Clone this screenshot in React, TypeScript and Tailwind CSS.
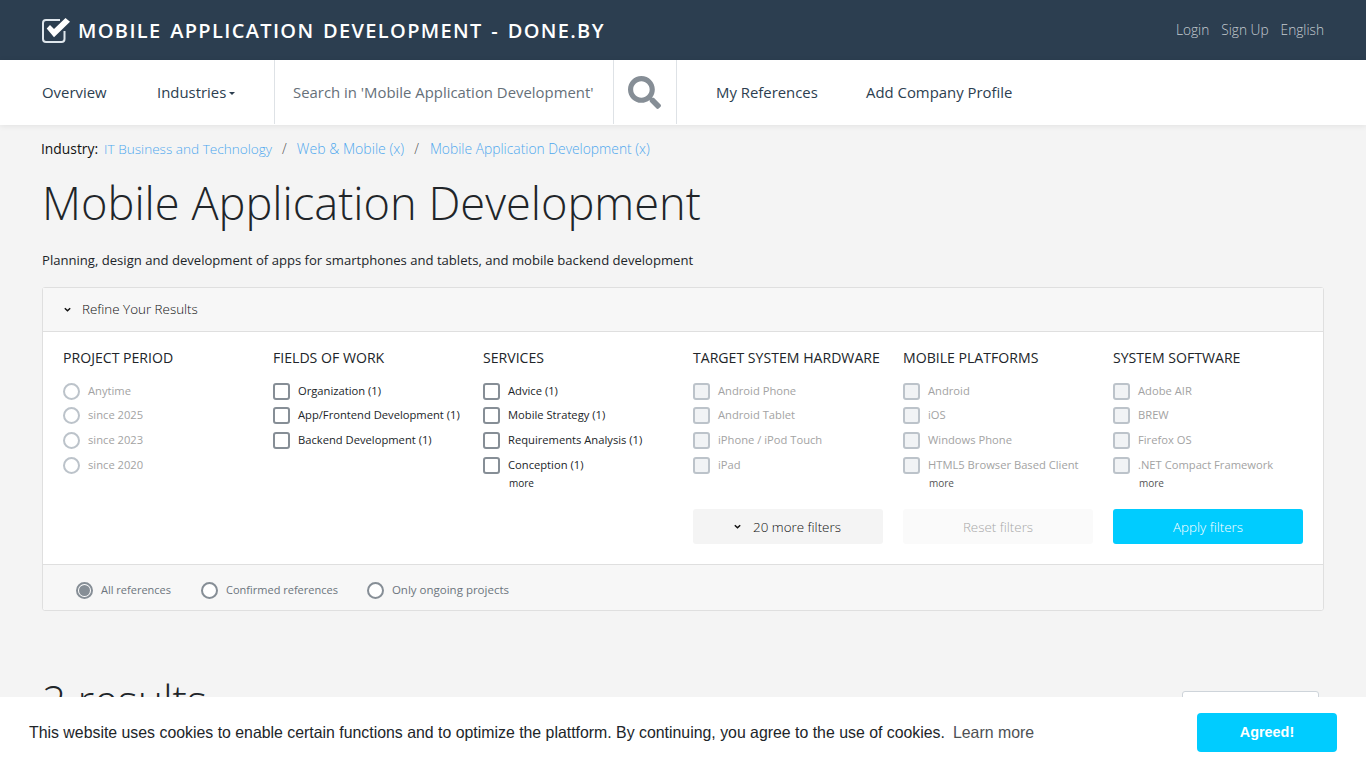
import React from "react";

const font = "font-['Open_Sans','Noto_Sans',sans-serif]";

function Box({ dim }: { dim?: boolean }) {
  return <span className={"block w-[17px] h-[17px] shrink-0 rounded-[3px] border-2 " + (dim ? "border-[#bcc3ca] bg-[#f1f3f5]" : "border-[#868e96] bg-white")} />;
}
function Radio({ dim, checked }: { dim?: boolean; checked?: boolean }) {
  return (
    <span className={"flex items-center justify-center w-[17px] h-[17px] shrink-0 rounded-full border-2 " + (dim ? "border-[#bcc3ca] bg-white" : "border-[#868e96] bg-white")}>
      {checked && <span className="block w-[11px] h-[11px] rounded-full bg-[#868e96]" />}
    </span>
  );
}

type Col = { title: string; items: string[]; kind: "radio" | "box"; dim?: boolean; more?: boolean };
const cols: Col[] = [
  { title: "PROJECT PERIOD", kind: "radio", dim: true, items: ["Anytime", "since 2025", "since 2023", "since 2020"] },
  { title: "FIELDS OF WORK", kind: "box", items: ["Organization (1)", "App/Frontend Development (1)", "Backend Development (1)"] },
  { title: "SERVICES", kind: "box", more: true, items: ["Advice (1)", "Mobile Strategy (1)", "Requirements Analysis (1)", "Conception (1)"] },
  { title: "TARGET SYSTEM HARDWARE", kind: "box", dim: true, items: ["Android Phone", "Android Tablet", "iPhone / iPod Touch", "iPad"] },
  { title: "MOBILE PLATFORMS", kind: "box", dim: true, more: true, items: ["Android", "iOS", "Windows Phone", "HTML5 Browser Based Client"] },
  { title: "SYSTEM SOFTWARE", kind: "box", dim: true, more: true, items: ["Adobe AIR", "BREW", "Firefox OS", ".NET Compact Framework"] },
];

function Chevron({ className }: { className?: string }) {
  return (
    <svg viewBox="0 0 10 10" className={className} fill="none" stroke="currentColor" strokeWidth="1.6">
      <path d="M2 3.5 L5 6.5 L8 3.5" />
    </svg>
  );
}

export default function App() {
  return (
    <div className={font + " relative h-screen overflow-hidden bg-[#f4f4f4] text-[#212529]"}>
      <header className="h-[60px] bg-[#2c3e50] flex items-center justify-between pl-[42px] pr-[42px]">
        <div className="flex items-center gap-[8px]">
          <svg viewBox="0 0 28 25" className="w-[28px] h-[25px] mt-[1px]" fill="none">
            <path d="M22.5 13 V21 a3 3 0 0 1 -3 3 H4 a3 3 0 0 1 -3 -3 V5 A3 3 0 0 1 4 2 H18" stroke="#dfe6ec" strokeWidth="2" />
            <path d="M4.7 10.5 L8 7 L12 11 L23.5 0 L28 3.8 L12 19.2 Z" fill="#fff" />
          </svg>
          <span className="text-white text-[20px] font-semibold tracking-[1.35px] [word-spacing:2px] leading-none pt-[2px]">MOBILE APPLICATION DEVELOPMENT - DONE.BY</span>
        </div>
        <div className="flex gap-[12px] text-[13.7px] font-light text-[#c5cbd1]">
          <span>Login</span><span>Sign Up</span><span>English</span>
        </div>
      </header>

      <nav className="relative h-[65px] bg-white flex items-stretch pl-[42px] shadow-[0_1px_6px_rgba(0,0,0,0.08)] text-[14.9px] text-[#2c3e50]">
        <div className="flex items-center w-[115px]">Overview</div>
        <div className="flex items-center w-[117px]">
          Industries
          <span className="ml-[3px] mt-[2px] border-x-[3.5px] border-x-transparent border-t-[3px] border-t-[#2c3e50]" />
        </div>
        <div className="flex items-center w-[340px] h-[64px] border-x border-[#dee2e6] pl-[18px] pt-[1px] text-[#667079] whitespace-nowrap overflow-hidden">Search in 'Mobile Application Development'</div>
        <div className="flex items-center justify-center w-[63px] h-[64px] border-r border-[#dee2e6]">
          <svg viewBox="0 0 512 512" className="w-[33px] h-[33px] mr-[1px]" fill="#868e96">
            <path d="M505 442.7L405.3 343c-4.5-4.5-10.6-7-17-7H372c27.6-35.3 44-79.7 44-128C416 93.1 322.9 0 208 0S0 93.1 0 208s93.1 208 208 208c48.3 0 92.7-16.4 128-44v16.3c0 6.4 2.5 12.5 7 17l99.7 99.7c9.4 9.4 24.6 9.4 33.9 0l28.3-28.3c9.4-9.4 9.4-24.6.1-34zM208 336c-70.7 0-128-57.2-128-128 0-70.7 57.2-128 128-128 70.7 0 128 57.2 128 128 0 70.7-57.2 128-128 128z" />
          </svg>
        </div>
        <div className="flex items-center ml-[39px] w-[150px]">My References</div>
        <div className="flex items-center">Add Company Profile</div>
      </nav>

      <main className="px-[42px]">
        <div className="flex items-baseline h-[21px] mt-[13px] text-[13.85px] font-light text-[#4fa8ee] whitespace-nowrap">
          <span className="text-[#111] font-normal mr-[6px] ml-[-1px]">Industry:</span>
          <span className="text-[13.6px]">IT Business and Technology</span>
          <span className="mx-[10px] text-[#555]">/</span>
          <span className="text-[14.1px]">Web &amp; Mobile (x)</span>
          <span className="mx-[10px] text-[#555]">/</span>
          <span className="ml-[1px]">Mobile Application Development (x)</span>
        </div>
        <h1 className="mt-[15px] text-[45.2px] leading-[58px] font-light text-[#212529] whitespace-nowrap">Mobile Application Development</h1>
        <p className="mt-[18px] text-[13.1px] leading-[20px] text-[#212529]">Planning, design and development of apps for smartphones and tablets, and mobile backend development</p>

        <section className="mt-[17px] rounded-[3px] border border-[#dfdfdf] bg-white">
          <div className="h-[44px] flex items-center bg-[#f7f7f7] border-b border-[#dfdfdf] pl-[20px] text-[13.4px] font-light text-[#111]">
            <Chevron className="w-[9px] h-[9px] mr-[10px]" />
            Refine Your Results
          </div>
          <div className="px-[20px] pt-[16px] h-[233px] border-b border-[#dfdfdf]">
            <div className="grid grid-cols-6 gap-x-[20px]">
              {cols.map((c) => (
                <div key={c.title}>
                  <div className="h-[20px] text-[14.1px] leading-[20px] font-medium text-[#212529] whitespace-nowrap">{c.title}</div>
                  <div className="mt-[11px]">
                    {c.items.map((it) => (
                      <div key={it} className="flex items-center gap-[8px] h-[25px] first:h-[24px] whitespace-nowrap">
                        {c.kind === "radio" ? <Radio dim={c.dim} /> : <Box dim={c.dim} />}
                        <span className={"text-[11.2px] " + (c.dim ? "text-[#a3a3a3]" : "text-[#212529]")}>{it}</span>
                      </div>
                    ))}
                    {c.more && <div className={"pl-[26px] text-[10px] leading-[12px] mt-[-1px] " + (c.dim ? "text-[#555]" : "text-[#212529]")}>more</div>}
                  </div>
                </div>
              ))}
            </div>
            <div className="grid grid-cols-6 gap-x-[20px] mt-[20px] text-[13.4px] font-light">
              <div className="col-start-4 h-[35px] rounded-[3px] bg-[#f4f4f4] flex items-center justify-center pt-[2px] pr-[2px] text-[#111]">
                <Chevron className="w-[9px] h-[9px] mr-[11px] mb-[2px]" />20 more filters
              </div>
              <div className="h-[35px] rounded-[3px] bg-[#fafafa] flex items-center justify-center pt-[2px] text-[#a8a8a8]">Reset filters</div>
              <div className="h-[35px] rounded-[3px] bg-[#00ccff] flex items-center justify-center pt-[2px] text-white">Apply filters</div>
            </div>
          </div>
          <div className="h-[45px] bg-[#f7f7f7] rounded-b-[3px] flex items-center pl-[33px] pt-[5px] text-[11px] leading-[16px] text-[#6c757d]">
            <Radio checked /><span className="ml-[8px] mr-[30px]">All references</span>
            <Radio /><span className="ml-[8px] mr-[29px]">Confirmed references</span>
            <Radio /><span className="ml-[8px] text-[11.5px]">Only ongoing projects</span>
          </div>
        </section>

        <div className="flex justify-between mt-[63px]">
          <h2 className="text-[42.8px] leading-[52px] font-light text-[#212529]">2 results</h2>
          <div className="mr-[5px] mt-[17px] w-[137px] h-[40px] bg-white border border-[#ced4da] rounded-[3px]" />
        </div>
      </main>

      <div className="absolute left-0 right-0 bottom-0 h-[71px] bg-white flex items-center justify-between pl-[29px] pr-[29px] font-['Liberation_Sans',Arial,sans-serif] text-[15.86px] text-[#212529]">
        <div className="whitespace-nowrap">
          This website uses cookies to enable certain functions and to optimize the plattform. By continuing, you agree to the use of cookies.
          <span className="ml-[8px] opacity-80">Learn more</span>
        </div>
        <div className="w-[140px] h-[39px] rounded-[4px] bg-[#00ccff] text-white text-[14.4px] font-bold flex items-center justify-center">Agreed!</div>
      </div>
    </div>
  );
}
